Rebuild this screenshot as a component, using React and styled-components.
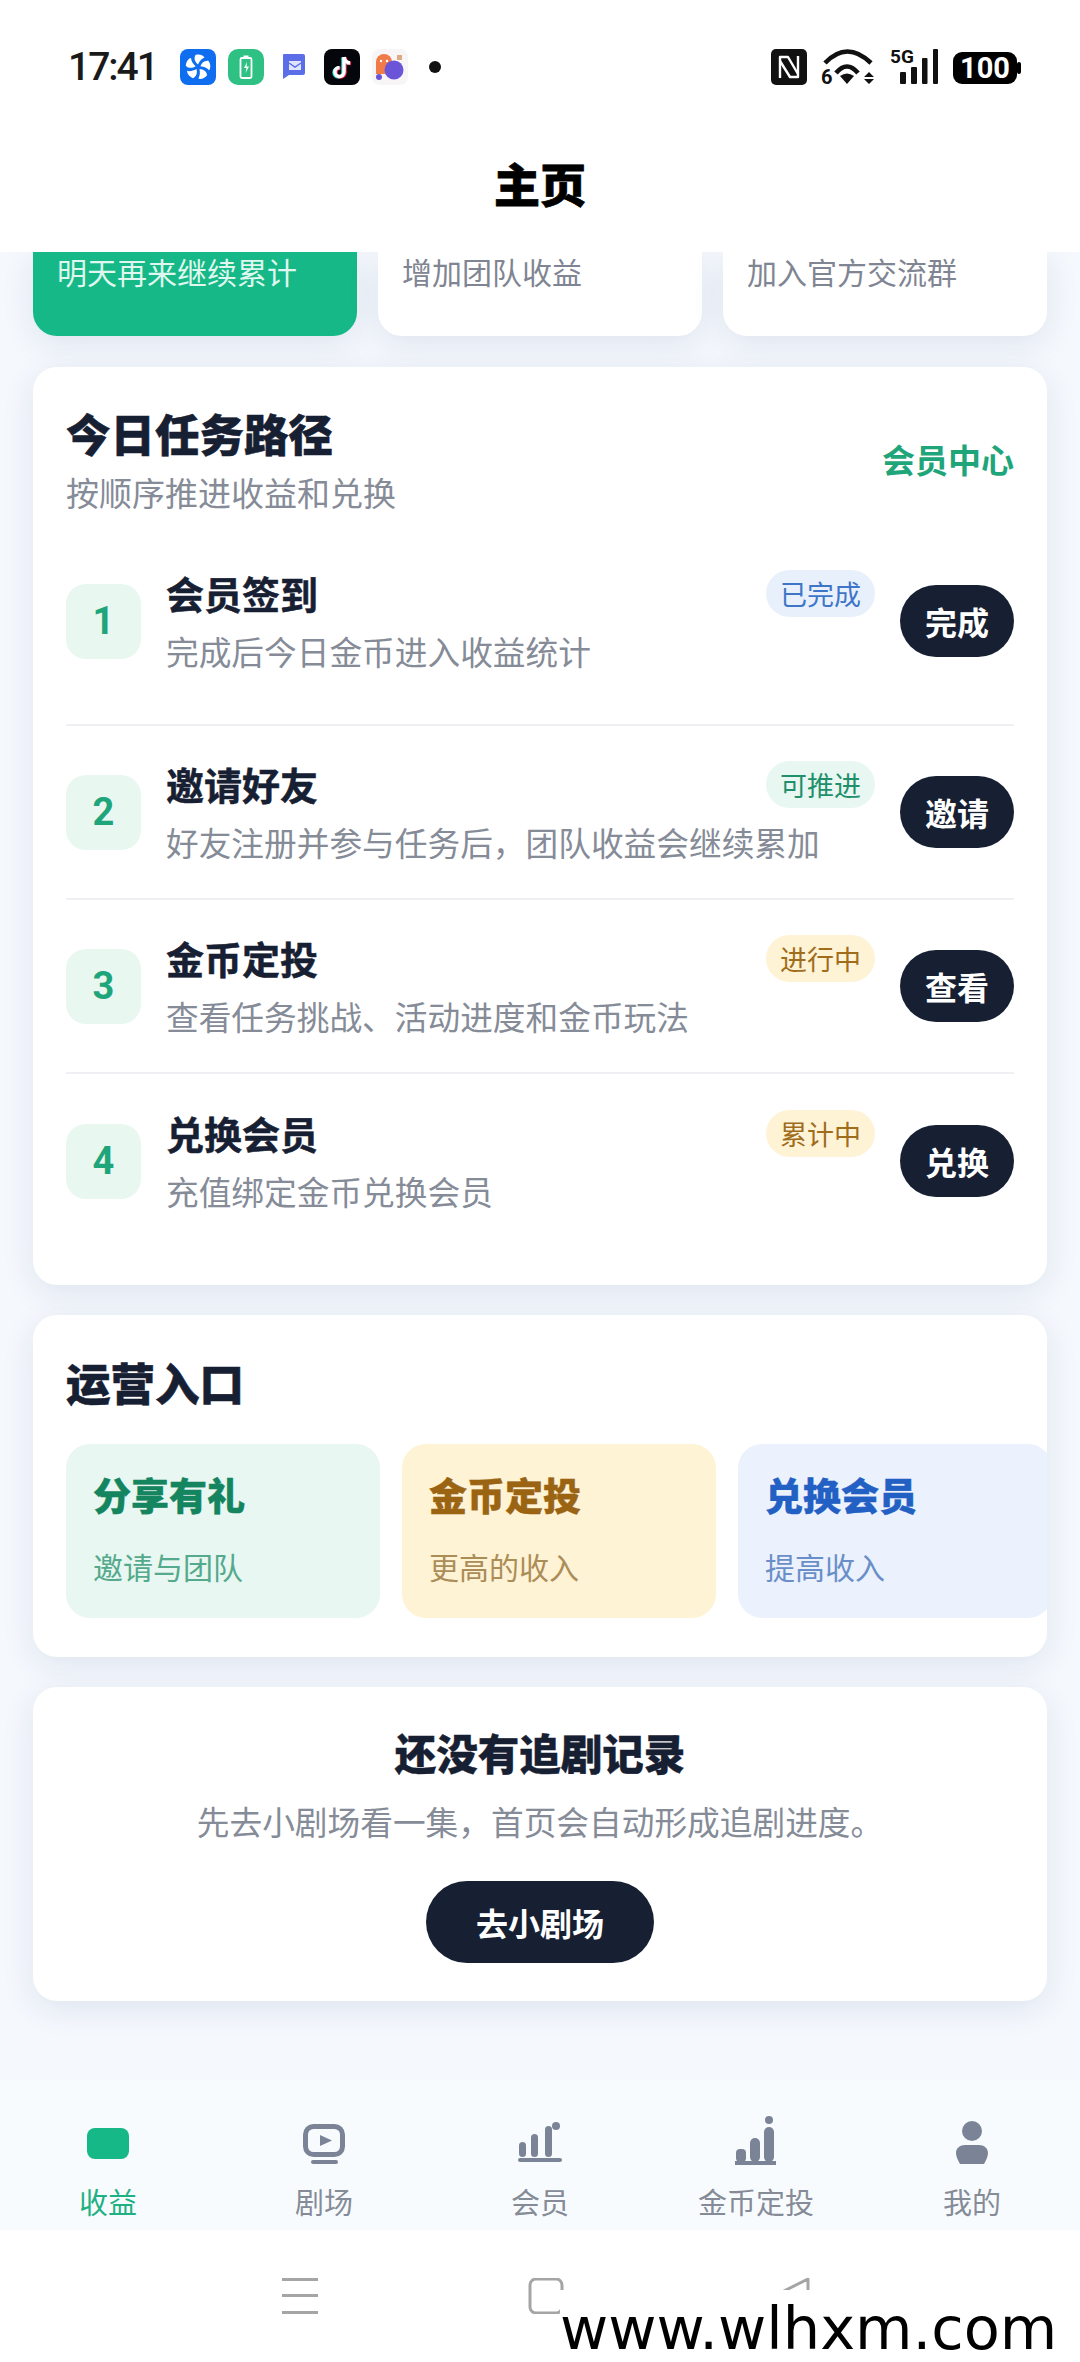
import React from "react";
import styled, { createGlobalStyle } from "styled-components";

const GlobalStyle = createGlobalStyle`
  * { box-sizing: border-box; }
  html, body { margin: 0; padding: 0; }
  body {
    background: #f5f8fd;
    font-family: "Noto Sans CJK SC", "Noto Sans", sans-serif;
  }
`;

const Screen = styled.div`
  position: relative;
  width: 1080px;
  height: 2362px;
  display: flex;
  flex-direction: column;
  overflow: hidden;
  background: #f5f8fd;
`;

const Header = styled.header`
  height: 252px;
  flex: none;
  background: #fff;
  position: relative;
  z-index: 2;
`;

const StatusBar = styled.div`
  height: 132px;
  padding: 49px 59px 0 68px;
  display: flex;
  justify-content: space-between;
  align-items: flex-start;
`;

const StatusLeft = styled.div`
  display: flex;
  align-items: center;
  height: 36px;
`;

const Clock = styled.span`
  width: 112px;
  font-family: Roboto, sans-serif;
  font-size: 39px;
  font-weight: 500;
  line-height: 36px;
  color: #1a1a1a;
  letter-spacing: -2px;
`;

const StatusRight = styled.div`
  display: flex;
  align-items: center;
  gap: 15px;
  height: 36px;
`;

const AppIcons = styled.div`
  display: flex;
  align-items: center;
  gap: 12px;
`;

const StatusDot = styled.span`
  width: 12px;
  height: 12px;
  margin-left: 9px;
  border-radius: 50%;
  background: #111;
`;

const Glyph = styled.svg`
  overflow: visible;
  flex: none;
`;

const PageTitle = styled.h1`
  margin: 0;
  text-align: center;
  font-size: 46px;
  font-weight: 900;
  line-height: 60px;
  color: #000;
  padding-top: 20px;
  -webkit-text-stroke: 0.8px #000;
`;

const Content = styled.main`
  flex: 1;
  padding: 0 33px;
  display: flex;
  flex-direction: column;
  gap: 30px;
  min-height: 0;
`;

const TopCards = styled.div`
  display: grid;
  grid-template-columns: repeat(3, 324px);
  gap: 21px;
  margin-bottom: 1px;
`;

const TopCard = styled.div`
  height: 84px;
  padding: 0 24px;
  border-radius: 0 0 24px 24px;
  font-size: 30px;
  line-height: 38px;
  white-space: nowrap;
  background: ${(p) => (p.$active ? "#15b886" : "#fff")};
  color: ${(p) => (p.$active ? "#dff7ee" : "#7f8592")};
  box-shadow: 0 8px 32px rgba(30, 60, 110, 0.1);
`;

const Card = styled.section`
  background: #fff;
  border-radius: 24px;
  box-shadow: 0 8px 32px rgba(30, 60, 110, 0.1);
`;

const TaskCard = styled(Card)`
  height: 918px;
  padding: 35px 33px 0;
`;

const CardHead = styled.header`
  display: flex;
  justify-content: space-between;
  align-items: flex-start;
  height: 133px;
`;

const HeadText = styled.div`
  display: flex;
  flex-direction: column;
`;

const CardTitle = styled.h2`
  margin: 0 0 3px;
  font-size: 44.5px;
  font-weight: 800;
  line-height: 62px;
  color: #172033;
  -webkit-text-stroke: 0.5px #172033;
`;

const CardSub = styled.p`
  margin: 0;
  font-size: 33px;
  line-height: 50px;
  color: #858b97;
`;

const HeadLink = styled.a`
  font-size: 33px;
  font-weight: 700;
  line-height: 46px;
  color: #1fa57a;
  margin-top: 34px;
`;

const Row = styled.div`
  height: 174px;
  display: flex;
  align-items: center;
  gap: 25px;
  border-bottom: 2px solid #eef0f3;

  &:first-of-type {
    height: 191px;
    padding-bottom: 17px;
  }

  &:last-of-type {
    border-bottom: none;
  }
`;

const StepNo = styled.div`
  width: 75px;
  height: 75px;
  flex: none;
  display: flex;
  align-items: center;
  justify-content: center;
  border-radius: 20px;
  background: #e9f7f1;
  font-family: Roboto, sans-serif;
  font-size: 38px;
  font-weight: 700;
  color: #1fa57a;
`;

const RowBody = styled.div`
  flex: 1;
  min-width: 0;
`;

const RowTop = styled.div`
  display: flex;
  align-items: center;
  justify-content: space-between;
  height: 48px;
`;

const RowTitle = styled.div`
  font-size: 38px;
  font-weight: 700;
  color: #172033;
  -webkit-text-stroke: 0.5px #172033;
`;

const Chip = styled.span`
  height: 47px;
  width: 109px;
  margin-top: 2px;
  display: flex;
  align-items: center;
  justify-content: center;
  border-radius: 24px;
  font-size: 27px;
  background: ${(p) => p.$bg};
  color: ${(p) => p.$fg};
`;

const RowDesc = styled.div`
  margin-top: 11px;
  font-size: 32.7px;
  line-height: 46px;
  white-space: nowrap;
  color: #858b97;
`;

const RowButton = styled.button`
  width: 114px;
  height: 72px;
  flex: none;
  border: none;
  padding: 0;
  border-radius: 36px;
  background: #172033;
  color: #fff;
  font-family: inherit;
  font-size: 32px;
  font-weight: 700;
`;

const OpsCard = styled(Card)`
  height: 342px;
  padding: 36px 0 0 33px;
  overflow: hidden;
`;

const OpsTiles = styled.div`
  display: flex;
  gap: 22px;
  margin-top: 31px;
`;

const OpsTile = styled.div`
  width: 314px;
  height: 174px;
  flex: none;
  padding: 23px 27px 0;
  border-radius: 24px;
  background: ${(p) => p.$bg};
`;

const OpsName = styled.div`
  font-size: 38px;
  font-weight: 800;
  line-height: 54px;
  color: ${(p) => p.$fg};
  -webkit-text-stroke: 0.4px ${(p) => p.$fg};
`;

const OpsSub = styled.div`
  margin-top: 23px;
  font-size: 30px;
  line-height: 44px;
  color: ${(p) => p.$fg};
`;

const EmptyCard = styled(Card)`
  height: 314px;
  padding-top: 36px;
  display: flex;
  flex-direction: column;
  align-items: center;
`;

const EmptyTitle = styled.h3`
  margin: 0;
  font-size: 41.5px;
  font-weight: 800;
  line-height: 58px;
  color: #172033;
  -webkit-text-stroke: 0.4px #172033;
`;

const EmptyText = styled.p`
  margin: 17px 0 0;
  font-size: 32.7px;
  line-height: 46px;
  color: #858b97;
`;

const EmptyButton = styled.button`
  width: 228px;
  height: 82px;
  margin-top: 37px;
  border: none;
  border-radius: 41px;
  background: #172033;
  color: #fff;
  font-family: inherit;
  font-size: 32px;
  font-weight: 700;
`;

const Nav = styled.nav`
  height: 150px;
  flex: none;
  display: grid;
  grid-template-columns: repeat(5, 1fr);
  background: #f8fbfe;
`;

const NavItem = styled.div`
  display: flex;
  flex-direction: column;
  align-items: center;
  padding-top: 33px;
  font-size: 29px;
  line-height: 40px;
  color: ${(p) => (p.$active ? "#1fb184" : "#858b97")};
`;

const NavLabel = styled.span`
  margin-top: 8px;
`;

const SystemBar = styled.div`
  height: 132px;
  flex: none;
  background: #fff;
  display: grid;
  grid-template-columns: repeat(3, 246px);
  justify-content: center;
  padding: 48px 0 0 12px;
  justify-items: center;
  align-items: start;
`;

const Watermark = styled.div`
  position: absolute;
  right: 0;
  bottom: 0;
  width: 520px;
  height: 72px;
  background: #fff;
  font-family: "DejaVu Sans", sans-serif;
  font-size: 59px;
  line-height: 78px;
  color: #000;
  z-index: 3;
  white-space: nowrap;
`;

const tasks = [
  { no: 1, title: "会员签到", desc: "完成后今日金币进入收益统计", chip: "已完成", bg: "#e8f0fc", fg: "#3f75c9", btn: "完成" },
  { no: 2, title: "邀请好友", desc: "好友注册并参与任务后，团队收益会继续累加", chip: "可推进", bg: "#e8f7f1", fg: "#1f8f6c", btn: "邀请" },
  { no: 3, title: "金币定投", desc: "查看任务挑战、活动进度和金币玩法", chip: "进行中", bg: "#fff3d6", fg: "#a06d1c", btn: "查看" },
  { no: 4, title: "兑换会员", desc: "充值绑定金币兑换会员", chip: "累计中", bg: "#fff3d6", fg: "#a06d1c", btn: "兑换" },
];

const ops = [
  { name: "分享有礼", sub: "邀请与团队", bg: "#e8f7f1", fg: "#14855f", subFg: "#55a98c" },
  { name: "金币定投", sub: "更高的收入", bg: "#fff3d6", fg: "#9a6412", subFg: "#ab8d58" },
  { name: "兑换会员", sub: "提高收入", bg: "#ecf2fd", fg: "#2260c4", subFg: "#6a8fc8" },
];

const FanIcon = () => (
  <Glyph width="36" height="36" viewBox="0 0 36 36">
    <rect width="36" height="36" rx="8" fill="#0f6df0" />
    <g fill="#fff">
      {[0, 72, 144, 216, 288].map((a) => (
        <path
          key={a}
          d="M18 15.5C15 13 13.5 9.5 15.5 6c3.5-1 7.5 0 9 2.5-2.500 1-5 3.500-6.500 7z"
          transform={`rotate(${a} 18 18)`}
        />
      ))}
    </g>
  </Glyph>
);

const BatteryAppIcon = () => (
  <Glyph width="36" height="36" viewBox="0 0 36 36">
    <rect width="36" height="36" rx="10" fill="#2fc184" />
    <rect x="12.5" y="9" width="11" height="20" rx="1.5" fill="none" stroke="#fff" strokeWidth="1.8" />
    <rect x="15.5" y="6.5" width="5" height="2.5" fill="#fff" />
    <path d="M19 13l-3 6h2.5l-1 5 3.5-6.500h-2.500z" fill="#fff" />
  </Glyph>
);

const MailIcon = () => (
  <Glyph width="36" height="36" viewBox="0 0 36 36">
    <path d="M8 5h19a2 2 0 0 1 2 2v17a2 2 0 0 1-2 2H13l-6 4V6a1 1 0 0 1 1-1z" fill="#5b6ee8" />
    <path d="M13 12h12v9H13z" fill="#dfe3fb" />
    <path d="M13 14l6 4 6-4" fill="none" stroke="#5b6ee8" strokeWidth="1.5" />
  </Glyph>
);

const TikTokIcon = () => (
  <Glyph width="36" height="36" viewBox="0 0 36 36">
    <rect width="36" height="36" rx="8" fill="#05060b" />
    <g fill="none" strokeWidth="3.4">
      <g stroke="#25e0e6" transform="translate(-1 0.5)">
        <path d="M20 8v15a4.5 4.5 0 1 1-4.5-4.5" />
        <path d="M20 8c.5 3.5 2.8 5.6 6 6" />
      </g>
      <g stroke="#fe2c55" transform="translate(1 0.5)">
        <path d="M20 8v15a4.5 4.5 0 1 1-4.5-4.5" />
        <path d="M20 8c.5 3.5 2.8 5.6 6 6" />
      </g>
      <g stroke="#fff">
        <path d="M20 8v15a4.5 4.5 0 1 1-4.5-4.5" />
        <path d="M20 8c.5 3.5 2.8 5.6 6 6" />
      </g>
    </g>
  </Glyph>
);

const BubblesIcon = () => (
  <Glyph width="36" height="36" viewBox="0 0 36 36">
    <rect width="36" height="36" rx="8" fill="#f8f5f7" />
    <path d="M4 13a8 8 0 0 1 16 0v4a8 8 0 0 1-8 8H4z" fill="#f07a48" />
    <circle cx="22" cy="21" r="9.5" fill="#6a55d8" />
    <circle cx="7" cy="28" r="3" fill="#6a55d8" />
    <rect x="25" y="6" width="5" height="5" fill="#e0a884" />
    <circle cx="9" cy="12" r="1.2" fill="#fff" />
    <circle cx="15" cy="12" r="1.2" fill="#fff" />
  </Glyph>
);

const NfcIcon = () => (
  <Glyph width="36" height="36" viewBox="0 0 36 36">
    <rect width="36" height="36" rx="5" fill="#111" />
    <path d="M9 29V8h8l10 17" fill="none" stroke="#fff" strokeWidth="2.4" strokeLinejoin="round" />
    <path d="M27 7v21h-8L9 12" fill="none" stroke="#fff" strokeWidth="2.4" strokeLinejoin="round" />
  </Glyph>
);

const WifiIcon = () => (
  <Glyph width="53" height="36" viewBox="0 0 53 36">
    <g fill="none" stroke="#111" strokeWidth="4.6">
      <path d="M3 14Q25-9 49 14" />
      <path d="M14 24Q25 11 36 24" />
    </g>
    <path d="M18 27q7-5 14 0l-7 8z" fill="#111" />
    <text x="-1" y="35" fontFamily="Roboto, sans-serif" fontSize="20" fontWeight="700" fill="#111">6</text>
    <path d="M42 28l5-5 5 5zM42 30h10l-5 5z" fill="#111" />
  </Glyph>
);

const SignalIcon = () => (
  <Glyph width="48" height="36" viewBox="0 0 48 36">
    <text x="0" y="14" fontFamily="Roboto, sans-serif" fontSize="19" fontWeight="700" fill="#111">5G</text>
    <rect x="10" y="23" width="6" height="12" rx="1" fill="#111" />
    <rect x="21" y="18" width="6" height="17" rx="1" fill="#111" />
    <rect x="32" y="9" width="5.5" height="26" rx="1" fill="#111" />
    <rect x="43" y="0" width="5" height="35" rx="1" fill="#111" />
  </Glyph>
);

const BatteryIcon = () => (
  <Glyph width="68" height="36" viewBox="0 0 68 36">
    <rect x="0" y="3" width="64" height="32" rx="9" fill="#000" />
    <rect x="64" y="13" width="4" height="12" rx="2" fill="#000" />
    <text x="32" y="29" textAnchor="middle" fontFamily="Roboto, sans-serif" fontSize="29" fontWeight="700" fill="#fff">100</text>
  </Glyph>
);

const MoneyIcon = () => (
  <svg width="60" height="60" viewBox="0 0 60 60">
    <rect x="9" y="15" width="42" height="31" rx="8" fill="#15b886" />
  </svg>
);

const PlayIcon = () => (
  <svg width="60" height="60" viewBox="0 0 60 60" fill="#7b8496">
    <rect x="11.5" y="13.5" width="37" height="28" rx="8" fill="none" stroke="#7b8496" strokeWidth="5" />
    <path d="M26 22l12 5.5-12 5.5z" />
    <rect x="17" y="47" width="27" height="4" rx="2" />
  </svg>
);

const ChartIcon = () => (
  <svg width="60" height="60" viewBox="0 0 60 60" fill="#7b8496">
    <rect x="9" y="29" width="7" height="15" rx="3.5" />
    <rect x="21" y="21" width="7" height="23" rx="3.5" />
    <rect x="35" y="13" width="7" height="31" rx="3.5" />
    <circle cx="46" cy="13" r="4" />
    <rect x="8" y="45" width="44" height="4" rx="2" />
  </svg>
);

const ChartTallIcon = () => (
  <svg width="60" height="60" viewBox="0 0 60 60" fill="#7b8496">
    <rect x="10" y="36" width="10" height="13" rx="4" />
    <rect x="24" y="25" width="10" height="24" rx="5" />
    <rect x="38" y="14" width="10" height="35" rx="5" />
    <circle cx="43" cy="7" r="4" />
    <rect x="9" y="48" width="41" height="4" />
  </svg>
);

const PersonIcon = () => (
  <svg width="60" height="60" viewBox="0 0 60 60" fill="#7b8496">
    <circle cx="30" cy="18" r="10" />
    <path d="M23 32h14c5 0 9 3 9 8 0 4-2 7-4 11H18c-2-4-4-7-4-11 0-5 4-8 9-8z" />
  </svg>
);

const MenuKey = () => (
  <svg width="40" height="36" viewBox="0 0 40 36" fill="#a5a5a5">
    <rect x="2" y="0" width="36" height="3" />
    <rect x="2" y="16" width="36" height="3" />
    <rect x="2" y="33" width="36" height="3" />
  </svg>
);

const HomeKey = () => (
  <svg width="40" height="36" viewBox="0 0 40 36">
    <rect x="4" y="1" width="32" height="34" rx="6" fill="none" stroke="#a5a5a5" strokeWidth="3" />
  </svg>
);

const BackKey = () => (
  <svg width="40" height="36" viewBox="0 0 40 36">
    <path d="M36 1L2 18l34 17z" fill="none" stroke="#a5a5a5" strokeWidth="3" strokeLinejoin="round" />
  </svg>
);

const navItems = [
  { label: "收益", Icon: MoneyIcon, active: true },
  { label: "剧场", Icon: PlayIcon },
  { label: "会员", Icon: ChartIcon },
  { label: "金币定投", Icon: ChartTallIcon },
  { label: "我的", Icon: PersonIcon },
];

const App = () => {
  return (
    <Screen>
      <GlobalStyle />
      <Header>
        <StatusBar>
          <StatusLeft>
            <Clock>17:41</Clock>
            <AppIcons>
              <FanIcon />
              <BatteryAppIcon />
              <MailIcon />
              <TikTokIcon />
              <BubblesIcon />
              <StatusDot />
            </AppIcons>
          </StatusLeft>
          <StatusRight>
            <NfcIcon />
            <WifiIcon />
            <SignalIcon />
            <BatteryIcon />
          </StatusRight>
        </StatusBar>
        <PageTitle>主页</PageTitle>
      </Header>

      <Content>
        <TopCards>
          <TopCard $active>明天再来继续累计</TopCard>
          <TopCard>增加团队收益</TopCard>
          <TopCard>加入官方交流群</TopCard>
        </TopCards>

        <TaskCard>
          <CardHead>
            <HeadText>
              <CardTitle>今日任务路径</CardTitle>
              <CardSub>按顺序推进收益和兑换</CardSub>
            </HeadText>
            <HeadLink>会员中心</HeadLink>
          </CardHead>
          {tasks.map((t) => (
            <Row key={t.no}>
              <StepNo>{t.no}</StepNo>
              <RowBody>
                <RowTop>
                  <RowTitle>{t.title}</RowTitle>
                  <Chip $bg={t.bg} $fg={t.fg}>{t.chip}</Chip>
                </RowTop>
                <RowDesc>{t.desc}</RowDesc>
              </RowBody>
              <RowButton>{t.btn}</RowButton>
            </Row>
          ))}
        </TaskCard>

        <OpsCard>
          <CardTitle>运营入口</CardTitle>
          <OpsTiles>
            {ops.map((o) => (
              <OpsTile key={o.name} $bg={o.bg}>
                <OpsName $fg={o.fg}>{o.name}</OpsName>
                <OpsSub $fg={o.subFg}>{o.sub}</OpsSub>
              </OpsTile>
            ))}
          </OpsTiles>
        </OpsCard>

        <EmptyCard>
          <EmptyTitle>还没有追剧记录</EmptyTitle>
          <EmptyText>先去小剧场看一集，首页会自动形成追剧进度。</EmptyText>
          <EmptyButton>去小剧场</EmptyButton>
        </EmptyCard>
      </Content>

      <Nav>
        {navItems.map(({ label, Icon, active }) => (
          <NavItem key={label} $active={active}>
            <Icon />
            <NavLabel>{label}</NavLabel>
          </NavItem>
        ))}
      </Nav>

      <SystemBar>
        <MenuKey />
        <HomeKey />
        <BackKey />
      </SystemBar>
      <Watermark>www.wlhxm.com</Watermark>
    </Screen>
  );
};

export default App;
